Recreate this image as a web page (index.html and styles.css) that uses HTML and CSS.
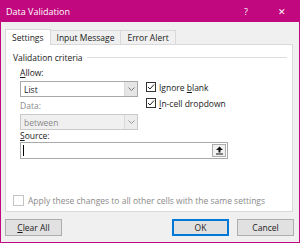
FILE: index.html
```html
<!DOCTYPE html>
<html lang="en">
<head>
    <meta charset="UTF-8">
    <title>Data Validation</title>
    <link rel="stylesheet" href="styles.css">
</head>
<body>
    <div class="window">
        <div class="titlebar">
            <span class="title">Data Validation</span>
            <span class="help">?</span>
            <span class="close">&#x2715;</span>
        </div>
        <div class="tabs">
            <div class="tab active">Settings</div>
            <div class="tab">Input Message</div>
            <div class="tab">Error Alert</div>
        </div>
        <div class="panel">
            <div class="group">
                <span>Validation criteria</span>
                <div class="rule"></div>
            </div>
            <div class="criteria">
                <div class="left">
                    <div class="label"><u>A</u>llow:</div>
                    <div class="select">
                        <span class="value">List</span>
                        <span class="arrow">
                            <svg width="7" height="4" viewBox="0 0 7 4"><path d="M0.5 0.5 L3.5 3.5 L6.5 0.5" fill="none" stroke="#777" stroke-width="1"/></svg>
                        </span>
                    </div>
                    <div class="label disabled">Data:</div>
                    <div class="select off">
                        <span class="value">between</span>
                        <span class="arrow">
                            <svg width="7" height="4" viewBox="0 0 7 4"><path d="M0.5 0.5 L3.5 3.5 L6.5 0.5" fill="none" stroke="#999" stroke-width="1"/></svg>
                        </span>
                    </div>
                </div>
                <div class="right">
                    <div class="check">
                        <svg class="box" width="10" height="10" viewBox="0 0 10 10"><rect x="0.5" y="0.5" width="9" height="9" fill="#fff" stroke="#333"/><path d="M2 5 L4 7 L8 2.5" fill="none" stroke="#222" stroke-width="1"/></svg>
                        <span>Ignore <u>b</u>lank</span>
                    </div>
                    <div class="check">
                        <svg class="box" width="10" height="10" viewBox="0 0 10 10"><rect x="0.5" y="0.5" width="9" height="9" fill="#fff" stroke="#333"/><path d="M2 5 L4 7 L8 2.5" fill="none" stroke="#222" stroke-width="1"/></svg>
                        <span><u>I</u>n-cell dropdown</span>
                    </div>
                </div>
            </div>
            <div class="label source-label"><u>S</u>ource:</div>
            <div class="source">
                <span class="caret"></span>
                <span class="pick">
                    <svg width="9" height="9" viewBox="0 0 9 9"><path d="M4.5 0.5 L8 4 L5.5 4 L5.5 6.5 L3.5 6.5 L3.5 4 L1 4 Z" fill="#111"/><rect x="1" y="7.5" width="7" height="1" fill="#111"/></svg>
                </span>
            </div>
            <div class="apply">
                <span class="box-off"></span>
                <span>Apply these changes to all other cells with the same settings</span>
            </div>
        </div>
        <div class="footer">
            <button class="btn"><u>C</u>lear All</button>
            <div class="spacer"></div>
            <button class="btn ok">OK</button>
            <button class="btn">Cancel</button>
        </div>
    </div>
</body>
</html>
```

FILE: styles.css
```css
body {
    margin: 0;
    font-family: "Open Sans", "Noto Sans", sans-serif;
    font-size: 8.5px;
    color: #1a1a1a;
}
.window {
    width: 300px;
    height: 243px;
    box-sizing: border-box;
    background-color: #f0f0f0;
    border: 1px solid #c2087e;
    border-top: none;
    display: flex;
    flex-direction: column;
}
.titlebar {
    height: 22px;
    background-color: #c2087e;
    color: #fff;
    display: flex;
    align-items: center;
    padding-left: 6px;
    margin: 0 -1px;
}
.title {
    flex: 1;
    font-size: 9px;
}
.help {
    width: 36px;
    text-align: center;
    font-size: 9px;
}
.close {
    width: 36px;
    text-align: center;
    font-size: 9px;
}
.tabs {
    display: flex;
    margin-top: 8px;
    padding-left: 4px;
    height: 14px;
    align-items: flex-end;
}
.tab {
    height: 14px;
    box-sizing: border-box;
    line-height: 13px;
    padding: 0 6px;
    border: 1px solid #d9d9d9;
    border-bottom: none;
    border-left: none;
    background-color: #f0f0f0;
}
.tab.active {
    height: 16px;
    line-height: 16px;
    background-color: #fff;
    border-left: 1px solid #d9d9d9;
    margin-bottom: -1px;
    position: relative;
}
.panel {
    height: 168px;
    box-sizing: border-box;
    margin: 0 6px 0 4px;
    background-color: #fff;
    border: 1px solid #d9d9d9;
    padding: 6px 0 0 7px;
}
.group {
    display: flex;
    align-items: center;
    height: 12px;
    padding-right: 5px;
}
.rule {
    flex: 1;
    height: 1px;
    background-color: #dcdcdc;
    margin-left: 4px;
}
.criteria {
    display: flex;
    padding-left: 7px;
    margin-top: 4px;
}
.left {
    width: 118px;
}
.label {
    height: 12px;
    line-height: 12px;
}
.label.disabled {
    color: #8a8a8a;
    margin-top: 3px;
}
.select {
    height: 16px;
    box-sizing: border-box;
    border: 1px solid #a9a9a9;
    display: flex;
    align-items: center;
    margin-top: 2px;
    background-color: #fff;
}
.select .value {
    flex: 1;
    padding-left: 3px;
}
.select .arrow {
    width: 12px;
    height: 14px;
    background-color: #e6e6e6;
    border-left: 1px solid #dadada;
    display: flex;
    align-items: center;
    justify-content: center;
}
.select.off {
    background-color: #f0f0f0;
    border-color: #c9c9c9;
    color: #8a8a8a;
}
.select.off .arrow {
    background-color: #ececec;
}
.right {
    padding-left: 8px;
    padding-top: 12px;
}
.check {
    display: flex;
    align-items: center;
    height: 16px;
}
.check .box {
    margin-right: 3px;
}
.source-label {
    margin-left: 7px;
    margin-top: 0;
}
.source {
    width: 208px;
    height: 17px;
    box-sizing: border-box;
    margin-left: 7px;
    border: 1px solid #a9a9a9;
    display: flex;
    align-items: center;
    justify-content: space-between;
    padding: 0 1px 0 2px;
}
.caret {
    width: 1px;
    height: 11px;
    background-color: #000;
}
.pick {
    width: 14px;
    height: 13px;
    box-sizing: border-box;
    border: 1px solid #adadad;
    background-color: #f2f2f2;
    display: flex;
    align-items: center;
    justify-content: center;
}
.apply {
    display: flex;
    align-items: center;
    margin-top: 36px;
    color: #8a8a8a;
}
.box-off {
    width: 9px;
    height: 9px;
    border: 1px solid #c4c4c4;
    background-color: #fff;
    margin-right: 4px;
}
.footer {
    display: flex;
    padding: 7px 5px 0 4px;
    gap: 8px;
}
.spacer {
    flex: 1;
}
.btn {
    width: 57px;
    height: 17px;
    box-sizing: border-box;
    border: 1px solid #adadad;
    background-color: #e1e1e1;
    font-family: "Open Sans", "Noto Sans", sans-serif;
    font-size: 8.5px;
    color: #1a1a1a;
    padding: 0;
}
.btn.ok {
    border: 1px solid #0078d7;
    box-shadow: inset 0 0 0 1px #0078d7;
}
```
